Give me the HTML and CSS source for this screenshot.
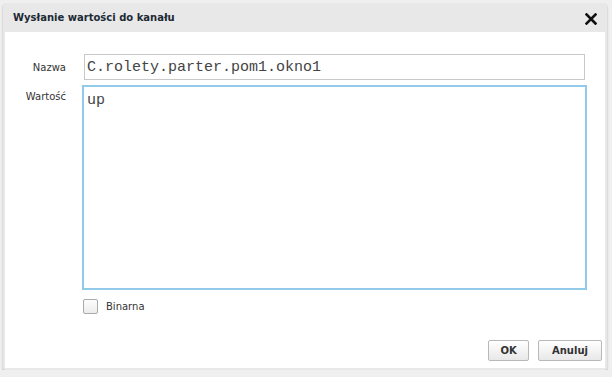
FILE: index.html
```html
<!DOCTYPE html>
<html lang="pl">
<head>
    <meta charset="UTF-8">
    <title>Wysłanie wartości do kanału</title>
    <link rel="stylesheet" href="styles.css">
</head>
<body>
    <div class="dialog">
        <div class="dialog-header">
            <span class="dialog-title">Wysłanie wartości do kanału</span>
            <button class="close-button" title="Zamknij">
                <svg width="12" height="12" viewBox="0 0 12 12">
                    <path d="M1.5 1.5 L10.5 10.5 M10.5 1.5 L1.5 10.5" stroke="#111" stroke-width="2.6" stroke-linecap="square"/>
                </svg>
            </button>
        </div>
        <div class="dialog-body">
            <div class="form-row">
                <label class="form-label" for="name">Nazwa</label>
                <input type="text" id="name" class="text-field" value="C.rolety.parter.pom1.okno1">
            </div>
            <div class="form-row top">
                <label class="form-label value-label" for="value">Wartość</label>
                <textarea id="value" class="text-area">up</textarea>
            </div>
            <div class="form-row">
                <span></span>
                <label class="check-label"><span class="check-box"></span>Binarna</label>
            </div>
            <div class="dialog-footer">
                <button class="dialog-button ok-button">OK</button>
                <button class="dialog-button">Anuluj</button>
            </div>
        </div>
    </div>
</body>
</html>
```

FILE: styles.css
```css
body {
    margin: 0;
    padding: 3px 5px 0 3px;
    background-color: #efefef;
    font-family: 'DejaVu Sans', Verdana, sans-serif;
    color: #333;
}
.dialog {
    width: 604px;
    height: 367px;
    display: flex;
    flex-direction: column;
    background-color: #e8e8e8;
    border-radius: 2px;
    box-shadow: 0 2px 2px rgba(0, 0, 0, 0.3);
}
.dialog-header {
    height: 29px;
    display: flex;
    align-items: center;
    justify-content: space-between;
    padding: 0 10px 0 10px;
}
.dialog-title {
    font-size: 10px;
    font-weight: bold;
    color: #1c2a35;
}
.close-button {
    background: none;
    border: none;
    padding: 0;
    margin-top: 2px;
    width: 12px;
    height: 12px;
    display: flex;
    cursor: pointer;
}
.dialog-body {
    flex: 1;
    margin: 0 2px 2px 2px;
    background-color: #fff;
    display: flex;
    flex-direction: column;
    padding: 22px 3px 7px 0;
}
.form-row {
    display: grid;
    grid-template-columns: 61px 505px;
    column-gap: 16px;
    align-items: center;
    margin-bottom: 5px;
}
.form-row.top {
    align-items: start;
    margin-bottom: 9px;
}
.form-label {
    font-size: 10px;
    text-align: right;
    color: #333;
}
.value-label {
    padding-top: 6px;
}
.text-field {
    margin: 0 2px;
    height: 26px;
    box-sizing: border-box;
    border: 1px solid #c8c8c8;
    padding: 0 2px;
    font-family: 'Liberation Mono', 'Courier New', monospace;
    font-size: 15px;
    color: #444;
    outline: none;
}
.text-area {
    height: 205px;
    box-sizing: border-box;
    border: 2px solid #92cbea;
    padding: 5px 3px;
    resize: none;
    font-family: 'Liberation Mono', 'Courier New', monospace;
    font-size: 15px;
    color: #444;
    outline: none;
}
.check-label {
    display: flex;
    align-items: center;
    gap: 8px;
    font-size: 10px;
    color: #333;
    margin-left: 1px;
}
.check-box {
    width: 13px;
    height: 13px;
    border: 1px solid #aaa;
    border-radius: 2px;
    background: linear-gradient(#fdfdfd, #ececec);
}
.dialog-footer {
    margin-top: auto;
    display: flex;
    justify-content: flex-end;
    gap: 9px;
}
.dialog-button {
    height: 21px;
    min-width: 64px;
    padding: 0 8px;
    border: 1px solid #b8b8b8;
    border-radius: 2px;
    background: linear-gradient(#ffffff, #e8e8e8);
    font-family: 'DejaVu Sans', Verdana, sans-serif;
    font-size: 10px;
    font-weight: bold;
    color: #333;
    cursor: pointer;
}
.ok-button {
    min-width: 41px;
}
```
